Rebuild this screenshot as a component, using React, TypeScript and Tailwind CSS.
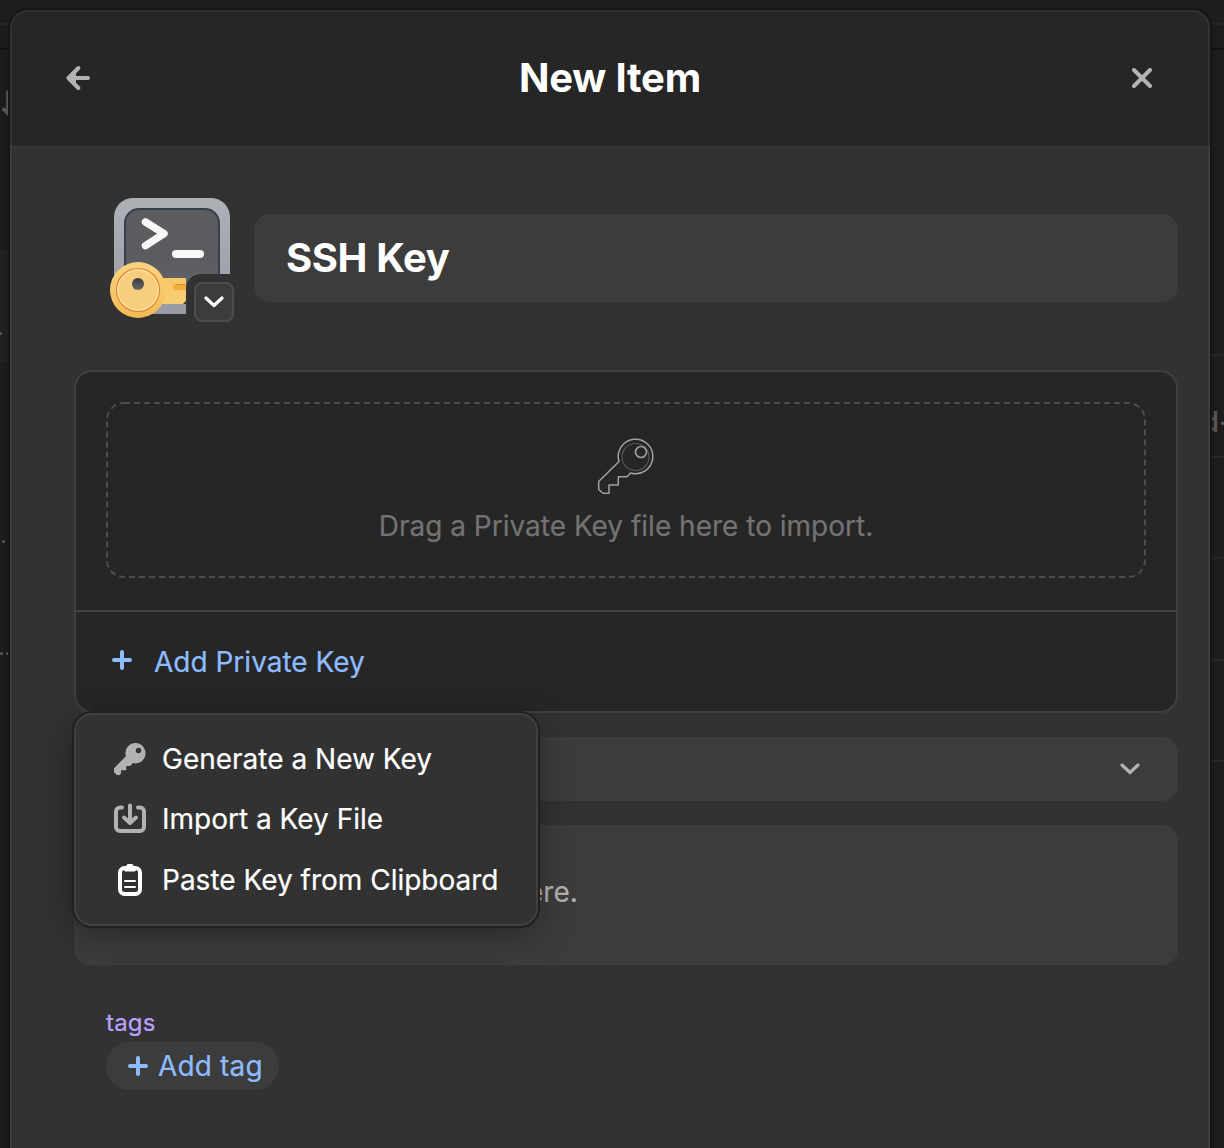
import type { ReactNode } from "react";

function BackArrow() {
  return (
    <svg width="28" height="28" viewBox="0 0 28 28" fill="none" stroke="#b2b2b2" strokeWidth="4" strokeLinecap="round" strokeLinejoin="round">
      <path d="M24 14H6M14.400 4L4.400 14l10 10" />
      <path d="M4 14l8-7v14z" fill="#b2b2b2" stroke="none" />
    </svg>
  );
}

function CloseIcon() {
  return (
    <svg width="20" height="20" viewBox="0 0 20 20" stroke="#b2b2b2" strokeWidth="4" strokeLinecap="round">
      <path d="M2 2l16 16M18 2L2 18" />
    </svg>
  );
}

function PlusIcon() {
  return (
    <svg width="20" height="20" viewBox="0 0 20 20" stroke="#8fbcff" strokeWidth="4" strokeLinecap="round">
      <path d="M10 2v16M2 10h16" />
    </svg>
  );
}

function Chevron({ color }: { color: string }) {
  return (
    <svg width="20" height="12" viewBox="0 0 20 12" fill="none" stroke={color} strokeWidth="3.200" strokeLinecap="round" strokeLinejoin="round">
      <path d="M2 2l8 7.500L18 2" />
    </svg>
  );
}

function SshKeyIcon() {
  return (
    <svg width="120" height="120" viewBox="0 0 120 120" className="block">
      <defs>
        <linearGradient id="frame" x1="0" y1="0" x2="0" y2="1">
          <stop offset="0" stopColor="#aeb1b6" />
          <stop offset="1" stopColor="#989ba5" />
        </linearGradient>
        <linearGradient id="screen" x1="0" y1="0" x2="0" y2="1">
          <stop offset="0" stopColor="#5c5d61" />
          <stop offset="0.5" stopColor="#5b5c60" />
          <stop offset="1" stopColor="#64666c" />
        </linearGradient>
        <linearGradient id="gold" x1="0" y1="0" x2="0" y2="1">
          <stop offset="0" stopColor="#fbd481" />
          <stop offset="1" stopColor="#f3bb55" />
        </linearGradient>
        <linearGradient id="shaft" x1="0" y1="0" x2="0" y2="1">
          <stop offset="0" stopColor="#f6c765" />
          <stop offset="1" stopColor="#f8ce74" />
        </linearGradient>
        <linearGradient id="hole" x1="0" y1="0" x2="0" y2="1">
          <stop offset="0" stopColor="#38393c" />
          <stop offset="1" stopColor="#686868" />
        </linearGradient>
        <clipPath id="notch">
          <path d="M0 0h120v76H90a14 14 0 0 0-14 14v30H0z" />
        </clipPath>
      </defs>
      <g clipPath="url(#notch)">
        <rect x="4" y="0" width="116" height="116" rx="19" fill="url(#frame)" />
        <rect x="15" y="11" width="94" height="94" rx="14" fill="url(#screen)" stroke="#353f4a" strokeWidth="2" />
        <path d="M35.500 24L54 35.700 35.500 47.600" fill="none" stroke="#f7f7f7" strokeWidth="7.500" strokeLinecap="round" strokeLinejoin="round" />
        <rect x="62" y="52" width="32" height="8" rx="4" fill="#f7f7f7" />
        <path d="M50 80h26v22.500L73 106H50z" fill="url(#shaft)" />
        <path d="M76 86H66a3 3 0 0 0 0 6h10z" fill="#f2ad3e" />
        <path d="M66 86.500h10" stroke="#e4942f" strokeWidth="1" />
      </g>
      <circle cx="28" cy="92" r="28" fill="url(#gold)" />
      <circle cx="28" cy="92" r="21.500" fill="#f7cd7e" stroke="#dc8433" strokeWidth="1.200" />
      <circle cx="28" cy="92" r="20" fill="none" stroke="#fddb96" strokeWidth="1.600" />
      <circle cx="28" cy="86" r="6" fill="url(#hole)" />
    </svg>
  );
}

function KeyOutline() {
  return (
    <svg width="60" height="60" viewBox="0 0 60 60" fill="none" strokeLinejoin="round">
      <path d="M23 24.500A17.300 17.300 0 1 1 34.500 36L31 39.700H22.300v8.400H13V56.300H7L2.700 52.500v-8z" stroke="#a2a2a2" strokeWidth="1.500" />
      <circle cx="39.500" cy="20" r="13.500" stroke="#555555" strokeWidth="1.200" />
      <circle cx="45" cy="15" r="5.500" stroke="#a2a2a2" strokeWidth="1.600" />
    </svg>
  );
}

function SolidKey() {
  return (
    <svg width="32" height="32" viewBox="0 0 32 32" fill="#b2b2b2" fillRule="evenodd">
      <path d="M21.700 0a10.200 10.200 0 1 1-2.800 20.100L16.200 23H12.200v4.200H7v3.400L5.600 32H3L0 29.300V25.200L11.900 13.200A10.200 10.200 0 0 1 21.700 0zM24.500 4.800a2.700 2.700 0 1 0 0 5.400 2.700 2.700 0 0 0 0-5.400z" />
    </svg>
  );
}

function ImportIcon() {
  return (
    <svg width="32" height="32" viewBox="0 0 32 32" fill="none" stroke="#b2b2b2" strokeWidth="4" strokeLinecap="round" strokeLinejoin="round">
      <path d="M8 4.500H6A4 4 0 0 0 2 8.500V24a4 4 0 0 0 4 4H26a4 4 0 0 0 4-4V8.500a4 4 0 0 0-4-4H24" />
      <path d="M16 2.500V18M10 14.500l6 5.500 6-5.500" />
    </svg>
  );
}

function ClipboardIcon() {
  return (
    <svg width="32" height="32" viewBox="0 0 32 32" fill="none">
      <rect x="6" y="4" width="20" height="26" rx="4.500" stroke="#fff" strokeWidth="4" />
      <path d="M8 3h4c.4-1.900 1-3 2.500-3h3c1.500 0 2.100 1.100 2.500 3h4l-2 3.200c-.5.900-1 1.300-2 1.300h-8c-1 0-1.500-.4-2-1.300z" fill="#fff" />
      <path d="M11 17h10M11 23h10" stroke="#fff" strokeWidth="2" strokeLinecap="round" />
    </svg>
  );
}

function MenuItem({ icon, label }: { icon: ReactNode; label: string }) {
  return (
    <button className="flex h-[60.400px] w-full items-center gap-4 pl-[38px] text-left text-[28px] leading-none whitespace-nowrap text-white">
      {icon}
      <span>{label}</span>
    </button>
  );
}

function Rule({ dark = false }: { dark?: boolean }) {
  return <div className={dark ? "h-[2px] shrink-0 bg-[#151515]" : "h-[2px] shrink-0 bg-[#292929]"} />;
}

function Dots({ count }: { count: number }) {
  return (
    <div className="flex h-[3px] justify-end gap-[3px]">
      {Array.from({ length: count }, (_, i) => (
        <span key={i} className="size-[3px] shrink-0 rounded-full bg-[#606060]" />
      ))}
    </div>
  );
}

function LeftEdge() {
  return (
    <div className="flex w-[10px] shrink-0 flex-col pt-[23px]" aria-hidden="true">
      <Rule />
      <div className="h-[23px]" />
      <Rule dark />
      <svg className="mt-[39px] block shrink-0" width="10" height="28" fill="none" stroke="#626262" strokeWidth="3.600" strokeLinecap="round">
        <path d="M8 3v22M4 20.500l4 4" />
      </svg>
      <div className="mt-[133px] h-[112px] bg-[#252525] pt-[82px] pr-[8px]">
        <Dots count={1} />
      </div>
      <div className="mt-[178px] pr-[5px]">
        <Dots count={1} />
      </div>
      <div className="mt-[109px] pr-px">
        <Dots count={2} />
      </div>
    </div>
  );
}

function RightEdge() {
  return (
    <div className="flex w-[14px] shrink-0 flex-col pt-[23px]" aria-hidden="true">
      <Rule />
      <div className="h-[23px]" />
      <Rule dark />
      <div className="h-[304px]" />
      <Rule />
      <div className="flex h-[100px] items-center justify-end pt-[31px] pr-px text-[28px] font-medium text-[#626262]">
        <span className="-mr-[9px] whitespace-nowrap">d-</span>
      </div>
      <Rule />
      <div className="h-[99px]" />
      <Rule />
      <div className="h-[100px]" />
      <Rule />
      <div className="h-[99px]" />
      <Rule />
    </div>
  );
}

export default function App() {
  return (
    <div className="flex h-[1148px] w-[1224px] overflow-hidden bg-[#1f1f1f] font-['Inter',sans-serif]">
      <LeftEdge />
      <div className="relative z-10 mt-[10px] h-[1200px] w-[1200px] shrink-0 overflow-hidden rounded-[18px] bg-[#323232] shadow-[0_0_0_2px_#161616,0_4px_24px_rgba(0,0,0,0.35)] after:pointer-events-none after:absolute after:inset-0 after:rounded-[18px] after:border-2 after:border-white/5 after:content-['']">
        <header className="flex h-[138px] items-center justify-between border-b-2 border-[#363636] bg-[#262626] px-[54px]">
          <button aria-label="Back" className="w-7"><BackArrow /></button>
          <h1 className="ml-[-4px] text-[40px] leading-none font-bold tracking-[-0.2px] text-white">New Item</h1>
          <button aria-label="Close" className="mr-[4px] w-5"><CloseIcon /></button>
        </header>

        <main className="pr-8 pl-16">
          <div className="flex pt-[50px] pl-[36px]">
            <div className="relative size-[120px]">
              <SshKeyIcon />
              <button aria-label="Change icon" className="absolute top-[84px] left-[84px] flex size-10 items-center justify-center rounded-lg border-2 border-[#4d4d4d] bg-[#3c3c3c]">
                <Chevron color="#ffffff" />
              </button>
            </div>
            <div className="mt-4 ml-6 flex h-[88px] flex-1 items-center rounded-2xl bg-[#3c3c3c] px-8 text-[40px] font-bold tracking-[-0.4px] text-white">
              SSH Key
            </div>
          </div>

          <div className="relative mt-[52px]">
            <section className="h-[343px] rounded-[18px] border-2 border-[#3f3f3f] bg-[#262626]">
              <div className="mx-[-2px] h-[240px] border-b-2 border-[#444444] px-[32px] pt-[30px]">
                <div className="relative flex h-[176px] flex-col items-center pt-[35px]">
                  <svg className="absolute inset-0 size-full" fill="none">
                    <rect x="1" y="1" width="1038" height="174" rx="17" stroke="#4d4d4d" strokeWidth="2" strokeDasharray="6 4" />
                  </svg>
                  <KeyOutline />
                  <p className="mt-[9px] text-[28px] leading-[40px] text-[#737373] [-webkit-text-stroke:0.2px]">Drag a Private Key file here to import.</p>
                </div>
              </div>
              <button className="flex h-[99px] items-center gap-[22px] pl-9 text-[28px] text-[#8fbcff] [-webkit-text-stroke:0.2px]">
                <span className="pb-[3px]"><PlusIcon /></span>
                <span>Add Private Key</span>
              </button>
            </section>
            <div className="absolute top-full left-0 z-10 h-[213px] w-[464px] rounded-[18px] border-2 border-[#404040] bg-[#323232] pt-[13.600px] shadow-[0_0_0_2px_#202020,0_8px_36px_rgba(0,0,0,0.35)] [-webkit-text-stroke:0.2px]">
              <MenuItem icon={<SolidKey />} label="Generate a New Key" />
              <MenuItem icon={<ImportIcon />} label="Import a Key File" />
              <MenuItem icon={<ClipboardIcon />} label="Paste Key from Clipboard" />
            </div>
          </div>

          <div className="mt-6 flex h-16 items-center justify-end rounded-2xl bg-[#3c3c3c] pr-[38px]">
            <Chevron color="#b2b2b2" />
          </div>
          <div className="mt-6 flex h-[140px] rounded-2xl bg-[#3c3c3c] pt-[47px] pl-[453px] text-[28px] leading-[40px] text-[#b2b2b2] [-webkit-text-stroke:0.2px]">
            <p>ere.</p>
          </div>

          <div className="mt-[43px] ml-8">
            <p className="text-[24px] leading-[30px] tracking-[0.2px] text-[#b8a3ff] [-webkit-text-stroke:0.2px]">tags</p>
            <button className="mt-1 flex h-12 w-[173px] items-center gap-[10px] rounded-full bg-[#3c3c3c] pl-[22px] text-[28px] tracking-[0.150px] text-[#8fbcff] [-webkit-text-stroke:0.2px]">
              <PlusIcon />
              <span>Add tag</span>
            </button>
          </div>
        </main>
      </div>
      <RightEdge />
    </div>
  );
}
